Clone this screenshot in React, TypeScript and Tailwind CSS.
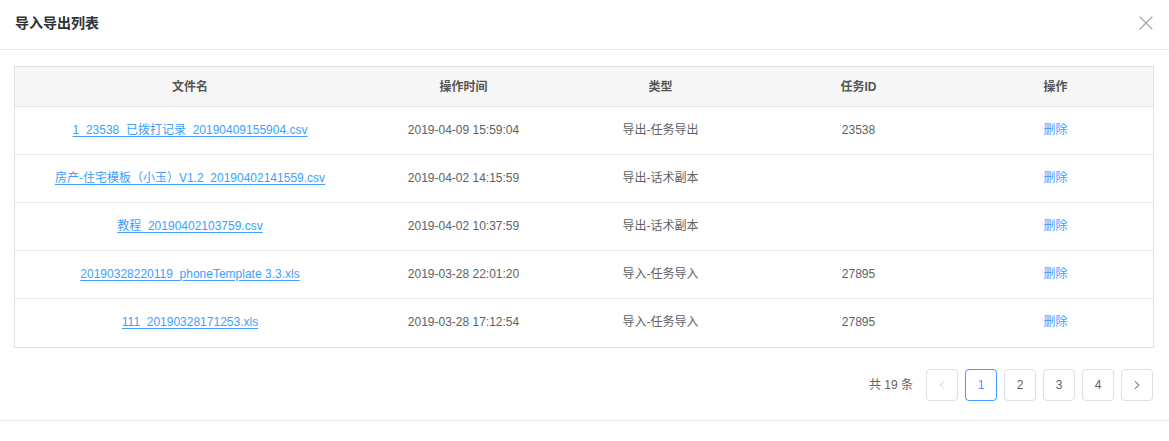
import { ChevronLeft, ChevronRight, X } from "lucide-react";

type Row = {
  file: string;
  time: string;
  type: string;
  taskId: string;
};

const rows: Row[] = [
  { file: "1_23538_已拨打记录_20190409155904.csv", time: "2019-04-09 15:59:04", type: "导出-任务导出", taskId: "23538" },
  { file: "房产-住宅模板（小玉）V1.2_20190402141559.csv", time: "2019-04-02 14:15:59", type: "导出-话术副本", taskId: "" },
  { file: "教程_20190402103759.csv", time: "2019-04-02 10:37:59", type: "导出-话术副本", taskId: "" },
  { file: "20190328220119_phoneTemplate 3.3.xls", time: "2019-03-28 22:01:20", type: "导入-任务导入", taskId: "27895" },
  { file: "111_20190328171253.xls", time: "2019-03-28 17:12:54", type: "导入-任务导入", taskId: "27895" },
];

const cols = "grid grid-cols-[350px_197px_197px_199px_1fr]";

export default function App() {
  return (
    <div
      className="w-[1169px] h-[441px] bg-white text-[12px] text-[#606266]"
      style={{ fontFamily: '"Liberation Sans", Arial, "Noto Sans CJK SC", sans-serif' }}
    >
      <div className="h-[50px] flex items-center justify-between pl-[15px] pr-[11px] border-b border-[#e8e8e8]">
        <h2 className="text-[14px] font-bold text-[#303133] -mt-[2px]">导入导出列表</h2>
        <button className="text-[#a3a3a3] -mt-[3px]">
          <X size={24} strokeWidth={1.1} />
        </button>
      </div>

      <div className="pt-4 px-[14px] pr-[15px]">
        <div className="border border-[#e0e0e0]">
          <div className={`${cols} h-10 items-center bg-[#f7f7f7] border-b border-[#e6e6e6] font-bold text-[#555]`}>
            <div className="text-center">文件名</div>
            <div className="text-center">操作时间</div>
            <div className="text-center">类型</div>
            <div className="text-center">任务ID</div>
            <div className="text-center">操作</div>
          </div>
          {rows.map((r, i) => (
            <div
              key={i}
              className={`${cols} h-12 items-center ${i < rows.length - 1 ? "border-b border-[#e8e8e8]" : ""}`}
            >
              <div className="text-center -mt-[2px]">
                <a className="text-[#409eff] underline underline-offset-2 cursor-pointer">{r.file}</a>
              </div>
              <div className="text-center -mt-[2px]">{r.time}</div>
              <div className="text-center -mt-[2px]">{r.type}</div>
              <div className="text-center -mt-[2px]">{r.taskId}</div>
              <div className="text-center -mt-[2px]">
                <a className="text-[#409eff] cursor-pointer">删除</a>
              </div>
            </div>
          ))}
        </div>
      </div>

      <div className="h-[73px] flex items-center justify-end pr-[16px] pt-[1px] border-b border-[#e8e8e8]">
        <span className="mr-[13px] text-[#606266]">共 19 条</span>
        <div className="flex gap-[7px]">
          <button className="w-8 h-8 flex items-center justify-center rounded border border-[#dcdfe6] text-[#c0c4cc]">
            <ChevronLeft size={14} strokeWidth={1.5} />
          </button>
          <button className="w-8 h-8 flex items-center justify-center rounded border border-[#409eff] text-[#409eff]">1</button>
          <button className="w-8 h-8 flex items-center justify-center rounded border border-[#dcdfe6]">2</button>
          <button className="w-8 h-8 flex items-center justify-center rounded border border-[#dcdfe6]">3</button>
          <button className="w-8 h-8 flex items-center justify-center rounded border border-[#dcdfe6]">4</button>
          <button className="w-8 h-8 flex items-center justify-center rounded border border-[#dcdfe6] text-[#606266]">
            <ChevronRight size={14} strokeWidth={1.8} />
          </button>
        </div>
      </div>
    </div>
  );
}
